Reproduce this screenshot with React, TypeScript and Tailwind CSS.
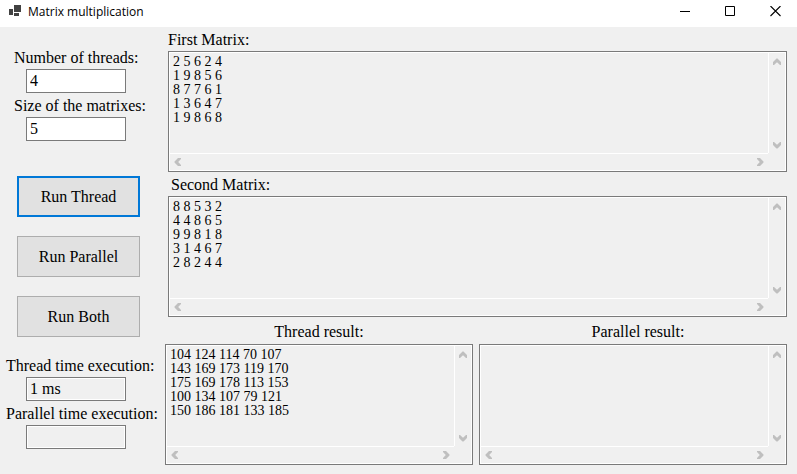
import { useId, useState } from "react";

type Direction = "up" | "down" | "left" | "right";

const chevrons: Record<Direction, string> = {
  up: "M0 7V4L3.5 .5H4.5L8 4V7H7L4 4.2L1 7z",
  down: "M0 1V4L3.5 7.5H4.5L8 4V1H7L4 3.8L1 1z",
  left: "M7 0H4L.5 3.5V4.5L4 8H7V7L4.2 4L7 1z",
  right: "M1 0H4L7.5 3.5V4.5L4 8H1V7L3.8 4L1 1z",
};

function ScrollArrow({ direction }: { direction: Direction }) {
  return (
    <button type="button" disabled aria-label={`Scroll ${direction}`} className="flex size-4 items-center justify-center">
      <svg width="8" height="8" viewBox="0 0 8 8" fill="#bfbfbf">
        <path d={chevrons[direction]} />
      </svg>
    </button>
  );
}

function MatrixBox({ id, value }: { id: string; value: string }) {
  return (
    <div className="grid h-[121px] grid-cols-[1fr_17px] grid-rows-[1fr_17px] border border-[#7a7a7a] bg-[#f0f0f0] outline outline-1 -outline-offset-2 outline-white p-px">
      <textarea
        id={id}
        readOnly
        wrap="off"
        value={value}
        className="block h-full w-full min-w-0 resize-none overflow-hidden px-[3px] py-0.5 text-[14px] leading-[14px] outline-none"
      />
      <div className="flex flex-col items-start justify-between border-l border-white pt-px">
        <ScrollArrow direction="up" />
        <ScrollArrow direction="down" />
      </div>
      <div className="flex items-center justify-between border-t border-white">
        <ScrollArrow direction="left" />
        <ScrollArrow direction="right" />
      </div>
      <div />
    </div>
  );
}

function MatrixField({ label, value, labelClass }: { label: string; value: string; labelClass: string }) {
  const id = useId();
  return (
    <div className="min-w-0 flex-1">
      <label htmlFor={id} className={`block ${labelClass}`}>{label}</label>
      <MatrixBox id={id} value={value} />
    </div>
  );
}

function SmallField({
  label,
  value,
  labelClass,
  onChange,
}: {
  label: string;
  value: string;
  labelClass: string;
  onChange?: (value: string) => void;
}) {
  const id = useId();
  return (
    <div>
      <label htmlFor={id} className={`block h-6 whitespace-nowrap leading-[26px] ${labelClass}`}>{label}</label>
      <input
        id={id}
        value={value}
        readOnly={!onChange}
        onChange={(event) => onChange?.(event.target.value)}
        className="ml-[26px] block h-6 w-[100px] border border-[#7a7a7a] bg-white px-[3px] outline-none read-only:bg-[#f0f0f0] read-only:shadow-[inset_0_0_0_1px_white]"
      />
    </div>
  );
}

const actions = ["Run Thread", "Run Parallel", "Run Both"];

const firstMatrix = "2 5 6 2 4\n1 9 8 5 6\n8 7 7 6 1\n1 3 6 4 7\n1 9 8 6 8";
const secondMatrix = "8 8 5 3 2\n4 4 8 6 5\n9 9 8 1 8\n3 1 4 6 7\n2 8 2 4 4";
const threadResult =
  "104 124 114 70 107\n143 169 173 119 170\n175 169 178 113 153\n100 134 107 79 121\n150 186 181 133 185";

function TitleBar() {
  return (
    <header className="flex h-[27px] items-start bg-white pl-2">
      <svg width="14" height="27" viewBox="0 0 14 27" fill="#424242" aria-hidden="true" className="mr-1.5 shrink-0">
        <path d="M1 9h4v6H1zM6 5h7v7H6zM6 13h5v3H6z" />
      </svg>
      <h1 className="flex-1 font-['Open_Sans',sans-serif] text-[12px] leading-6">Matrix multiplication</h1>
      <button type="button" aria-label="Minimize" className="flex h-[23px] w-[45px] items-center justify-center">
        <svg width="11" height="11" viewBox="0 0 11 11" stroke="black"><path d="M1 5.5h10" /></svg>
      </button>
      <button type="button" aria-label="Maximize" className="flex h-[23px] w-[45px] items-center justify-center">
        <svg width="11" height="11" viewBox="0 0 11 11" fill="none" stroke="black"><path d="M1.5 .5h9v9h-9z" /></svg>
      </button>
      <button type="button" aria-label="Close" className="flex h-[23px] w-[45px] items-center justify-center">
        <svg width="12" height="11" viewBox="0 0 12 11" stroke="black" strokeWidth="1.1"><path d="M1.5 0l10 10M11.5 0l-10 10" /></svg>
      </button>
    </header>
  );
}

export default function App() {
  const [threads, setThreads] = useState("4");
  const [size, setSize] = useState("5");
  const [active, setActive] = useState("Run Thread");

  return (
    <div className="min-h-screen bg-[#f0f0f0] font-['Liberation_Serif',serif] text-[16px] text-black">
      <TitleBar />
      <main className="flex pr-2.5">
        <aside className="w-[165px] shrink-0 pt-[18px]">
          <SmallField label="Number of threads:" value={threads} onChange={setThreads} labelClass="pl-3.5" />
          <SmallField label="Size of the matrixes:" value={size} onChange={setSize} labelClass="pl-3.5" />
          <div className="mt-[35px] mb-4 ml-[17px] flex w-[123px] flex-col gap-[19px]">
            {actions.map((action) => (
              <button
                key={action}
                type="button"
                onClick={() => setActive(action)}
                className={`h-[41px] bg-[#e1e1e1] ${
                  action === active ? "border-2 border-[#0078d7]" : "border border-[#adadad]"
                }`}
              >
                {action}
              </button>
            ))}
          </div>
          <SmallField label="Thread time execution:" value="1 ms" labelClass="pl-1.5" />
          <SmallField label="Parallel time execution:" value="" labelClass="pl-1.5" />
        </aside>
        <section className="min-w-0 flex-1">
          <div className="pl-[3px]">
            <MatrixField label="First Matrix:" value={firstMatrix} labelClass="h-6 leading-[26px]" />
            <MatrixField label="Second Matrix:" value={secondMatrix} labelClass="h-6 pl-[3px] leading-[26px]" />
          </div>
          <div className="flex gap-1.5">
            <MatrixField label="Thread result:" value={threadResult} labelClass="h-[27px] text-center leading-[29px]" />
            <MatrixField label="Parallel result:" value="" labelClass="h-[27px] pl-2.5 text-center leading-[29px]" />
          </div>
        </section>
      </main>
    </div>
  );
}
